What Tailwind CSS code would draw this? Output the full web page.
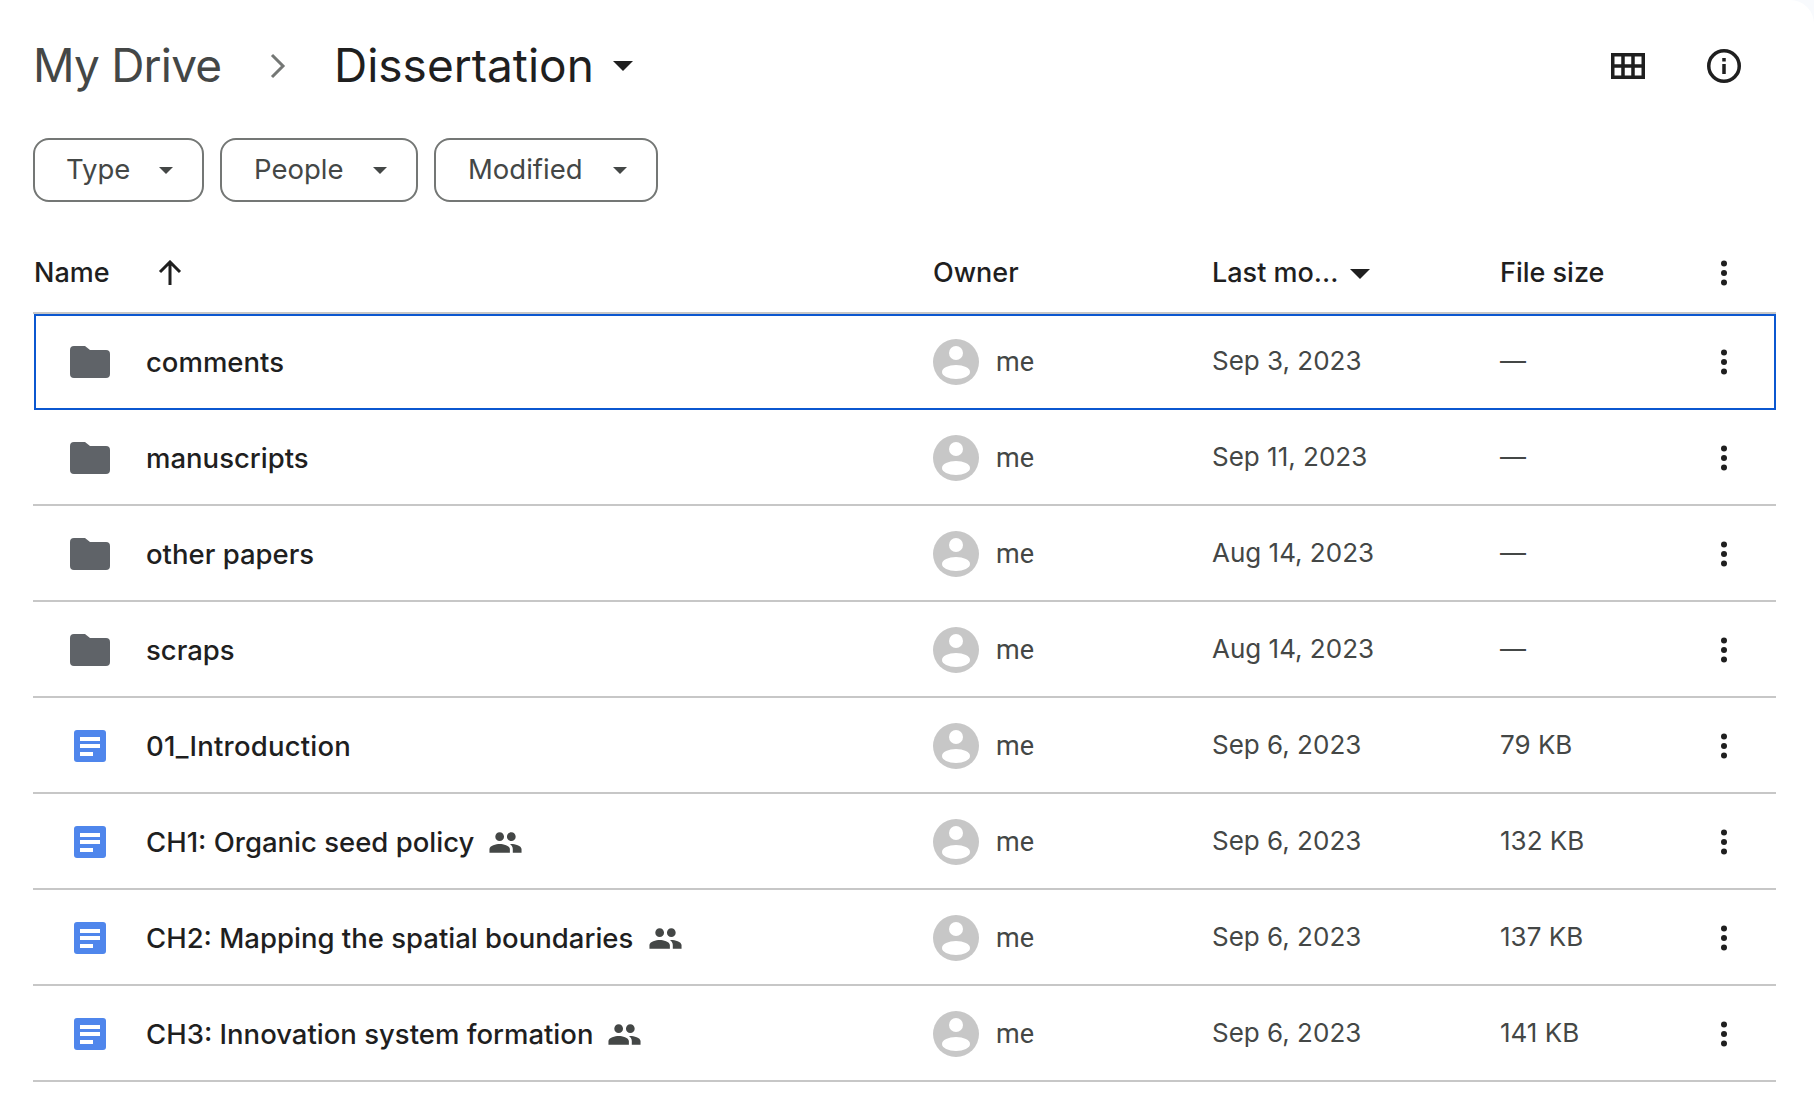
<!DOCTYPE html>
<html><head><script src="https://cdn.jsdelivr.net/npm/@tailwindcss/browser@4"></script></head>
<body class="bg-[#f8fafd] font-['Inter',sans-serif] w-[1814px] h-[1100px] overflow-hidden">
<main class="bg-white rounded-tr-[24px] h-[1100px] w-[1814px]">
<div class="pl-[33px] w-[1776px] flex flex-col">
  <header class="h-[132px] flex items-center">
    <span class="text-[46px] text-[#444746] tracking-[-0.8px] w-[188px] whitespace-nowrap pb-[2px]">My Drive</span>
    <svg class="ml-[49px] mr-[48px]" width="16" height="26" viewBox="0 0 16 26" fill="none" stroke="#747775" stroke-width="3"><path d="M2 2l11 11-11 11"/></svg>
    <span class="text-[46px] text-[#1f1f1f] pb-[2px]">Dissertation</span>
    <svg class="ml-[19px]" width="20" height="10" viewBox="0 0 20 10"><path d="M0 0h20L10 10z" fill="#1f1f1f"/></svg>
    <div class="ml-auto flex items-center mr-[35px] gap-[62px]">
      <svg width="34" height="26" viewBox="0 0 34 26" fill="none" stroke="#1f1f1f" stroke-width="3.5"><rect x="1.75" y="1.75" width="30.5" height="22.5"/><path d="M1.5 13h31M12 1.5v23M22 1.5v23"/></svg>
      <svg width="34" height="34" viewBox="0 0 34 34" fill="none"><circle cx="17" cy="17" r="15.25" stroke="#1f1f1f" stroke-width="3.5"/><path d="M15.25 15h3.5v10h-3.5zM15.25 9h3.5v3.5h-3.5z" fill="#1f1f1f"/></svg>
    </div>
  </header>
  <div class="h-[64px] flex gap-[16px] mt-[6px]">
    <button class="w-[171px] h-[64px] border-2 border-[#747775] rounded-[16px] flex items-center pl-[31px] text-[#444746] text-[27.5px]"><span>Type</span><svg class="ml-auto mr-[29px]" width="14" height="7" viewBox="0 0 14 7"><path d="M0 0h14L7 7z" fill="#444746"/></svg></button>
    <button class="w-[198px] h-[64px] border-2 border-[#747775] rounded-[16px] flex items-center pl-[32px] text-[#444746] text-[27.5px]"><span>People</span><svg class="ml-auto mr-[29px]" width="14" height="7" viewBox="0 0 14 7"><path d="M0 0h14L7 7z" fill="#444746"/></svg></button>
    <button class="w-[224px] h-[64px] border-2 border-[#747775] rounded-[16px] flex items-center pl-[32px] text-[#444746] text-[27.5px]"><span>Modified</span><svg class="ml-auto mr-[29px]" width="14" height="7" viewBox="0 0 14 7"><path d="M0 0h14L7 7z" fill="#444746"/></svg></button>
  </div>
  <div class="h-[112px] pt-[32px] flex items-center border-b-2 border-[#c7c7c7] text-[#1f1f1f] font-medium text-[27px]">
    <div class="w-[900px] flex items-center pl-px"><span>Name</span><svg class="ml-[47px]" width="26" height="26" viewBox="0 0 26 26" fill="none" stroke="#1f1f1f" stroke-width="3"><path d="M13 25V3M3 12l10-10 10 10"/></svg></div>
    <div class="w-[279px]">Owner</div>
    <div class="w-[288px] flex items-center"><span>Last mo...</span><svg class="ml-[12px] mt-[2px]" width="20" height="10" viewBox="0 0 20 10"><path d="M0 0h20L10 10z" fill="#1f1f1f"/></svg></div>
    <div class="w-[200px]">File size</div>
    <svg width="8" height="26" viewBox="0 0 8 26" class="ml-[20px]" fill="#1f1f1f"><circle cx="4" cy="3.5" r="3"/><circle cx="4" cy="13" r="3"/><circle cx="4" cy="22.5" r="3"/></svg>
  </div>
  <section class="text-[27.5px]">
  <div class="h-[96px] flex items-center ml-px border-2 border-[#0b57d0]">
    <div class="w-[897px] flex items-center pl-[34px]">
      <svg width="40" height="32" viewBox="0 0 40 32"><path d="M4 0h11l5 4h16a4 4 0 0 1 4 4v20a4 4 0 0 1-4 4H4a4 4 0 0 1-4-4V4a4 4 0 0 1 4-4z" fill="#5f6368"/></svg>
      <span class="ml-[36px] pt-[2px] font-medium text-[#1f1f1f]">comments</span>
    </div>
    <div class="w-[279px] flex items-center"><svg width="46" height="46" viewBox="0 0 46 46"><circle cx="23" cy="23" r="23" fill="#c7c7c7"/><circle cx="23" cy="14" r="7" fill="#fff"/><ellipse cx="23" cy="33" rx="14" ry="7" fill="#fff"/></svg><span class="ml-[17px] text-[#444746] font-['Roboto'] text-[27px]">me</span></div>
    <div class="w-[288px] text-[#444746] text-[26px] pb-[4px]">Sep 3, 2023</div>
    <div class="w-[200px] text-[#444746] text-[26px] pb-[4px]">—</div>
    <svg width="8" height="26" viewBox="0 0 8 26" class="ml-[20px]" fill="#1f1f1f"><circle cx="4" cy="3.5" r="3"/><circle cx="4" cy="13" r="3"/><circle cx="4" cy="22.5" r="3"/></svg>
  </div>
  <div class="h-[96px] pt-[2px] flex items-center border-b-2 border-[#c7c7c7]">
    <div class="w-[900px] flex items-center pl-[37px]">
      <svg width="40" height="32" viewBox="0 0 40 32"><path d="M4 0h11l5 4h16a4 4 0 0 1 4 4v20a4 4 0 0 1-4 4H4a4 4 0 0 1-4-4V4a4 4 0 0 1 4-4z" fill="#5f6368"/></svg>
      <span class="ml-[36px] pt-[2px] font-medium text-[#1f1f1f]">manuscripts</span>
    </div>
    <div class="w-[279px] flex items-center"><svg width="46" height="46" viewBox="0 0 46 46"><circle cx="23" cy="23" r="23" fill="#c7c7c7"/><circle cx="23" cy="14" r="7" fill="#fff"/><ellipse cx="23" cy="33" rx="14" ry="7" fill="#fff"/></svg><span class="ml-[17px] text-[#444746] font-['Roboto'] text-[27px]">me</span></div>
    <div class="w-[288px] text-[#444746] text-[26px] pb-[4px]">Sep 11, 2023</div>
    <div class="w-[200px] text-[#444746] text-[26px] pb-[4px]">—</div>
    <svg width="8" height="26" viewBox="0 0 8 26" class="ml-[20px]" fill="#1f1f1f"><circle cx="4" cy="3.5" r="3"/><circle cx="4" cy="13" r="3"/><circle cx="4" cy="22.5" r="3"/></svg>
  </div>
  <div class="h-[96px] pt-[2px] flex items-center border-b-2 border-[#c7c7c7]">
    <div class="w-[900px] flex items-center pl-[37px]">
      <svg width="40" height="32" viewBox="0 0 40 32"><path d="M4 0h11l5 4h16a4 4 0 0 1 4 4v20a4 4 0 0 1-4 4H4a4 4 0 0 1-4-4V4a4 4 0 0 1 4-4z" fill="#5f6368"/></svg>
      <span class="ml-[36px] pt-[2px] font-medium text-[#1f1f1f]">other papers</span>
    </div>
    <div class="w-[279px] flex items-center"><svg width="46" height="46" viewBox="0 0 46 46"><circle cx="23" cy="23" r="23" fill="#c7c7c7"/><circle cx="23" cy="14" r="7" fill="#fff"/><ellipse cx="23" cy="33" rx="14" ry="7" fill="#fff"/></svg><span class="ml-[17px] text-[#444746] font-['Roboto'] text-[27px]">me</span></div>
    <div class="w-[288px] text-[#444746] text-[26px] pb-[4px]">Aug 14, 2023</div>
    <div class="w-[200px] text-[#444746] text-[26px] pb-[4px]">—</div>
    <svg width="8" height="26" viewBox="0 0 8 26" class="ml-[20px]" fill="#1f1f1f"><circle cx="4" cy="3.5" r="3"/><circle cx="4" cy="13" r="3"/><circle cx="4" cy="22.5" r="3"/></svg>
  </div>
  <div class="h-[96px] pt-[2px] flex items-center border-b-2 border-[#c7c7c7]">
    <div class="w-[900px] flex items-center pl-[37px]">
      <svg width="40" height="32" viewBox="0 0 40 32"><path d="M4 0h11l5 4h16a4 4 0 0 1 4 4v20a4 4 0 0 1-4 4H4a4 4 0 0 1-4-4V4a4 4 0 0 1 4-4z" fill="#5f6368"/></svg>
      <span class="ml-[36px] pt-[2px] font-medium text-[#1f1f1f]">scraps</span>
    </div>
    <div class="w-[279px] flex items-center"><svg width="46" height="46" viewBox="0 0 46 46"><circle cx="23" cy="23" r="23" fill="#c7c7c7"/><circle cx="23" cy="14" r="7" fill="#fff"/><ellipse cx="23" cy="33" rx="14" ry="7" fill="#fff"/></svg><span class="ml-[17px] text-[#444746] font-['Roboto'] text-[27px]">me</span></div>
    <div class="w-[288px] text-[#444746] text-[26px] pb-[4px]">Aug 14, 2023</div>
    <div class="w-[200px] text-[#444746] text-[26px] pb-[4px]">—</div>
    <svg width="8" height="26" viewBox="0 0 8 26" class="ml-[20px]" fill="#1f1f1f"><circle cx="4" cy="3.5" r="3"/><circle cx="4" cy="13" r="3"/><circle cx="4" cy="22.5" r="3"/></svg>
  </div>
  <div class="h-[96px] pt-[2px] flex items-center border-b-2 border-[#c7c7c7]">
    <div class="w-[900px] flex items-center pl-[41px]">
      <svg width="32" height="32" viewBox="0 0 32 32"><rect width="32" height="32" rx="3" fill="#4f86ec"/><path d="M6 7h20v4H6zM6 14h20v4H6zM6 22h13v4H6z" fill="#fff"/></svg>
      <span class="ml-[40px] pt-[2px] font-medium text-[#1f1f1f] tracking-[0.2px]">01_Introduction</span>
    </div>
    <div class="w-[279px] flex items-center"><svg width="46" height="46" viewBox="0 0 46 46"><circle cx="23" cy="23" r="23" fill="#c7c7c7"/><circle cx="23" cy="14" r="7" fill="#fff"/><ellipse cx="23" cy="33" rx="14" ry="7" fill="#fff"/></svg><span class="ml-[17px] text-[#444746] font-['Roboto'] text-[27px]">me</span></div>
    <div class="w-[288px] text-[#444746] text-[26px] pb-[4px]">Sep 6, 2023</div>
    <div class="w-[200px] text-[#444746] text-[26px] pb-[4px]">79 KB</div>
    <svg width="8" height="26" viewBox="0 0 8 26" class="ml-[20px]" fill="#1f1f1f"><circle cx="4" cy="3.5" r="3"/><circle cx="4" cy="13" r="3"/><circle cx="4" cy="22.5" r="3"/></svg>
  </div>
  <div class="h-[96px] pt-[2px] flex items-center border-b-2 border-[#c7c7c7]">
    <div class="w-[900px] flex items-center pl-[41px]">
      <svg width="32" height="32" viewBox="0 0 32 32"><rect width="32" height="32" rx="3" fill="#4f86ec"/><path d="M6 7h20v4H6zM6 14h20v4H6zM6 22h13v4H6z" fill="#fff"/></svg>
      <span class="ml-[40px] pt-[2px] font-medium text-[#1f1f1f]">CH1: Organic seed policy</span>
      <svg class="ml-[14px]" width="35" height="35" viewBox="0 0 24 24" fill="#444746"><path d="M16 11c1.66 0 2.99-1.34 2.99-3S17.66 5 16 5c-1.66 0-3 1.34-3 3s1.34 3 3 3zm-8 0c1.66 0 2.99-1.34 2.99-3S9.66 5 8 5C6.34 5 5 6.34 5 8s1.34 3 3 3zm0 2c-2.33 0-7 1.17-7 3.5V19h14v-2.5c0-2.33-4.67-3.5-7-3.5zm8 0c-.29 0-.62.02-.97.05 1.16.84 1.97 1.97 1.97 3.45V19h6v-2.5c0-2.33-4.67-3.5-7-3.5z"/></svg>
    </div>
    <div class="w-[279px] flex items-center"><svg width="46" height="46" viewBox="0 0 46 46"><circle cx="23" cy="23" r="23" fill="#c7c7c7"/><circle cx="23" cy="14" r="7" fill="#fff"/><ellipse cx="23" cy="33" rx="14" ry="7" fill="#fff"/></svg><span class="ml-[17px] text-[#444746] font-['Roboto'] text-[27px]">me</span></div>
    <div class="w-[288px] text-[#444746] text-[26px] pb-[4px]">Sep 6, 2023</div>
    <div class="w-[200px] text-[#444746] text-[26px] pb-[4px]">132 KB</div>
    <svg width="8" height="26" viewBox="0 0 8 26" class="ml-[20px]" fill="#1f1f1f"><circle cx="4" cy="3.5" r="3"/><circle cx="4" cy="13" r="3"/><circle cx="4" cy="22.5" r="3"/></svg>
  </div>
  <div class="h-[96px] pt-[2px] flex items-center border-b-2 border-[#c7c7c7]">
    <div class="w-[900px] flex items-center pl-[41px]">
      <svg width="32" height="32" viewBox="0 0 32 32"><rect width="32" height="32" rx="3" fill="#4f86ec"/><path d="M6 7h20v4H6zM6 14h20v4H6zM6 22h13v4H6z" fill="#fff"/></svg>
      <span class="ml-[40px] pt-[2px] font-medium text-[#1f1f1f]">CH2: Mapping the spatial boundaries</span>
      <svg class="ml-[15px]" width="35" height="35" viewBox="0 0 24 24" fill="#444746"><path d="M16 11c1.66 0 2.99-1.34 2.99-3S17.66 5 16 5c-1.66 0-3 1.34-3 3s1.34 3 3 3zm-8 0c1.66 0 2.99-1.34 2.99-3S9.66 5 8 5C6.34 5 5 6.34 5 8s1.34 3 3 3zm0 2c-2.33 0-7 1.17-7 3.5V19h14v-2.5c0-2.33-4.67-3.5-7-3.5zm8 0c-.29 0-.62.02-.97.05 1.16.84 1.97 1.97 1.97 3.45V19h6v-2.5c0-2.33-4.67-3.5-7-3.5z"/></svg>
    </div>
    <div class="w-[279px] flex items-center"><svg width="46" height="46" viewBox="0 0 46 46"><circle cx="23" cy="23" r="23" fill="#c7c7c7"/><circle cx="23" cy="14" r="7" fill="#fff"/><ellipse cx="23" cy="33" rx="14" ry="7" fill="#fff"/></svg><span class="ml-[17px] text-[#444746] font-['Roboto'] text-[27px]">me</span></div>
    <div class="w-[288px] text-[#444746] text-[26px] pb-[4px]">Sep 6, 2023</div>
    <div class="w-[200px] text-[#444746] text-[26px] pb-[4px]">137 KB</div>
    <svg width="8" height="26" viewBox="0 0 8 26" class="ml-[20px]" fill="#1f1f1f"><circle cx="4" cy="3.5" r="3"/><circle cx="4" cy="13" r="3"/><circle cx="4" cy="22.5" r="3"/></svg>
  </div>
  <div class="h-[96px] pt-[2px] flex items-center border-b-2 border-[#c7c7c7]">
    <div class="w-[900px] flex items-center pl-[41px]">
      <svg width="32" height="32" viewBox="0 0 32 32"><rect width="32" height="32" rx="3" fill="#4f86ec"/><path d="M6 7h20v4H6zM6 14h20v4H6zM6 22h13v4H6z" fill="#fff"/></svg>
      <span class="ml-[40px] pt-[2px] font-medium text-[#1f1f1f]">CH3: Innovation system formation</span>
      <svg class="ml-[14px]" width="35" height="35" viewBox="0 0 24 24" fill="#444746"><path d="M16 11c1.66 0 2.99-1.34 2.99-3S17.66 5 16 5c-1.66 0-3 1.34-3 3s1.34 3 3 3zm-8 0c1.66 0 2.99-1.34 2.99-3S9.66 5 8 5C6.34 5 5 6.34 5 8s1.34 3 3 3zm0 2c-2.33 0-7 1.17-7 3.5V19h14v-2.5c0-2.33-4.67-3.5-7-3.5zm8 0c-.29 0-.62.02-.97.05 1.16.84 1.97 1.97 1.97 3.45V19h6v-2.5c0-2.33-4.67-3.5-7-3.5z"/></svg>
    </div>
    <div class="w-[279px] flex items-center"><svg width="46" height="46" viewBox="0 0 46 46"><circle cx="23" cy="23" r="23" fill="#c7c7c7"/><circle cx="23" cy="14" r="7" fill="#fff"/><ellipse cx="23" cy="33" rx="14" ry="7" fill="#fff"/></svg><span class="ml-[17px] text-[#444746] font-['Roboto'] text-[27px]">me</span></div>
    <div class="w-[288px] text-[#444746] text-[26px] pb-[4px]">Sep 6, 2023</div>
    <div class="w-[200px] text-[#444746] text-[26px] pb-[4px]">141 KB</div>
    <svg width="8" height="26" viewBox="0 0 8 26" class="ml-[20px]" fill="#1f1f1f"><circle cx="4" cy="3.5" r="3"/><circle cx="4" cy="13" r="3"/><circle cx="4" cy="22.5" r="3"/></svg>
  </div>
  </section>
</div>
</main>
</body></html>
